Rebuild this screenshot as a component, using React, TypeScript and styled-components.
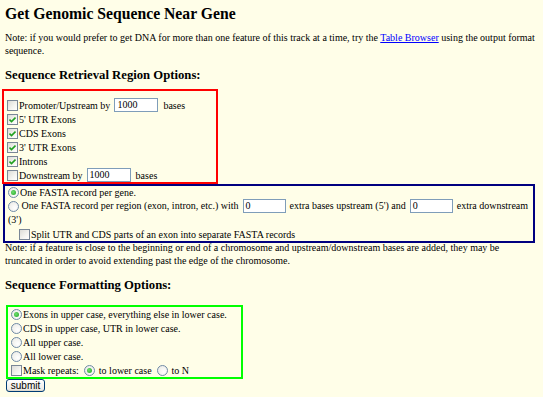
import React from 'react';
import styled, { createGlobalStyle } from 'styled-components';

const GlobalStyle = createGlobalStyle`
    html, body {
        margin: 0;
        padding: 0;
        background: #fffee8;
    }
    body {
        font-family: 'Liberation Serif', 'Times New Roman', serif;
        font-size: 10px;
        color: #000;
    }
`;

const Page = styled.div`
    width: 543px;
    height: 397px;
    overflow: hidden;
    padding: 0 5px;
    box-sizing: border-box;
`;

const Title = styled.h2`
    font-size: 15.7px;
    font-weight: bold;
    line-height: 20px;
    margin: 4px 0 0 0;
`;

const Note = styled.p<{ $top: number }>`
    margin: ${(p) => p.$top}px 0 0 0;
    line-height: 13px;
`;

const TableLink = styled.a`
    color: #0000ff;
    text-decoration: underline;
`;

const SectionTitle = styled.h3<{ $top: number }>`
    font-size: 12.7px;
    font-weight: bold;
    line-height: 16px;
    margin: ${(p) => p.$top}px 0 0 0;
`;

const Box = styled.div<{ $color: string; $left: number; $width: number; $top: number }>`
    border: 2px solid ${(p) => p.$color};
    margin: ${(p) => p.$top}px 0 0 ${(p) => p.$left}px;
    width: ${(p) => p.$width}px;
    box-sizing: border-box;
`;

const Spacer = styled.div<{ $h: number }>`
    height: ${(p) => p.$h}px;
`;

const Row = styled.div<{ $h?: number; $indent?: number }>`
    display: flex;
    align-items: center;
    height: ${(p) => p.$h ?? 14}px;
    padding-left: ${(p) => p.$indent ?? 3}px;
    white-space: nowrap;
`;

const FlowRow = styled.div`
    line-height: 14px;
    padding-left: 3px;
    padding-right: 2px;
`;

const Label = styled.span<{ $gap?: number }>`
    margin-left: ${(p) => p.$gap ?? 1}px;
`;

const CheckBox = styled.span`
    display: inline-flex;
    align-items: center;
    justify-content: center;
    width: 11px;
    height: 11px;
    border: 1px solid #7a8796;
    background: linear-gradient(135deg, #dcdcd7 0%, #f4f4f0 60%, #ffffff 100%);
    box-sizing: border-box;
    flex: none;
    vertical-align: middle;
`;

const Radio = styled.span`
    display: inline-flex;
    align-items: center;
    justify-content: center;
    width: 11px;
    height: 11px;
    border: 1px solid #6f8aa6;
    border-radius: 50%;
    background: radial-gradient(circle at 65% 65%, #ffffff 0%, #e8e8e2 100%);
    box-sizing: border-box;
    flex: none;
    vertical-align: middle;
`;

const Dot = styled.span`
    width: 5px;
    height: 5px;
    border-radius: 50%;
    background: radial-gradient(circle at 40% 40%, #6fe06f 0%, #21a121 100%);
`;

const TextBox = styled.span<{ $w: number }>`
    display: inline-block;
    width: ${(p) => p.$w}px;
    height: 14px;
    line-height: 12px;
    border: 1px solid #7f9db9;
    background: #fff;
    padding-left: 2px;
    box-sizing: border-box;
    vertical-align: middle;
    margin: -1px 4px 0 4px;
`;

const Submit = styled.button`
    display: block;
    margin-left: 1px;
    width: 39px;
    height: 13px;
    padding: 0;
    font-family: 'Liberation Sans', Arial, sans-serif;
    font-size: 10px;
    line-height: 11px;
    border: 1px solid #003c74;
    border-radius: 3px;
    background: linear-gradient(#ffffff, #ecebe6 85%, #d6d0c5);
    color: #000;
    overflow: visible;
`;

const Check: React.FC<{ on?: boolean }> = ({ on }) => (
    <CheckBox>
        {on && (
            <svg width="7" height="7" viewBox="0 0 7 7">
                <path d="M0.5 3.5 L2.5 5.5 L6.5 1.5" stroke="#21a121" strokeWidth="1.6" fill="none" />
            </svg>
        )}
    </CheckBox>
);

const RadioBtn: React.FC<{ on?: boolean }> = ({ on }) => <Radio>{on && <Dot />}</Radio>;

const App: React.FC = () => {
    return (
        <Page>
            <GlobalStyle />
            <Title>Get Genomic Sequence Near Gene</Title>
            <Note $top={7}>
                Note: if you would prefer to get DNA for more than one feature of this track at a time, try the{' '}
                <TableLink href="#">Table Browser</TableLink> using the output format sequence.
            </Note>
            <SectionTitle $top={10}>Sequence Retrieval Region Options:</SectionTitle>

            <Box $color="#ff0000" $left={-3} $width={216} $top={6}>
                <Spacer $h={7} />
                <Row>
                    <Check />
                    <Label>Promoter/Upstream by</Label>
                    <TextBox $w={44}>1000</TextBox>
                    <Label>bases</Label>
                </Row>
                <Row><Check on /><Label>5' UTR Exons</Label></Row>
                <Row><Check on /><Label>CDS Exons</Label></Row>
                <Row><Check on /><Label>3' UTR Exons</Label></Row>
                <Row><Check on /><Label>Introns</Label></Row>
                <Row>
                    <Check />
                    <Label>Downstream by</Label>
                    <TextBox $w={44}>1000</TextBox>
                    <Label>bases</Label>
                </Row>
            </Box>

            <Box $color="#000080" $left={-2} $width={532} $top={0}>
                <Row $h={13}><RadioBtn on /><Label>One FASTA record per gene.</Label></Row>
                <FlowRow>
                    <RadioBtn /> One FASTA record per region (exon, intron, etc.) with
                    <TextBox $w={43}>0</TextBox>extra bases upstream (5') and
                    <TextBox $w={43}>0</TextBox>extra downstream (3')
                </FlowRow>
                <Row $indent={14}><Check /><Label>Split UTR and CDS parts of an exon into separate FASTA records</Label></Row>
            </Box>

            <Note $top={-2}>
                Note: if a feature is close to the beginning or end of a chromosome and upstream/downstream bases are added, they may be
                truncated in order to avoid extending past the edge of the chromosome.
            </Note>

            <SectionTitle $top={10}>Sequence Formatting Options:</SectionTitle>

            <Box $color="#00ff00" $left={1} $width={237} $top={12}>
                <Row><RadioBtn on /><Label>Exons in upper case, everything else in lower case.</Label></Row>
                <Row><RadioBtn /><Label>CDS in upper case, UTR in lower case.</Label></Row>
                <Row><RadioBtn /><Label>All upper case.</Label></Row>
                <Row><RadioBtn /><Label>All lower case.</Label></Row>
                <Row>
                    <Check />
                    <Label>Mask repeats:</Label>
                    <Label $gap={5}><RadioBtn on /></Label>
                    <Label $gap={4}>to lower case</Label>
                    <Label $gap={5}><RadioBtn /></Label>
                    <Label $gap={4}>to N</Label>
                </Row>
            </Box>
            <Submit type="button">submit</Submit>
        </Page>
    );
};

export default App;
